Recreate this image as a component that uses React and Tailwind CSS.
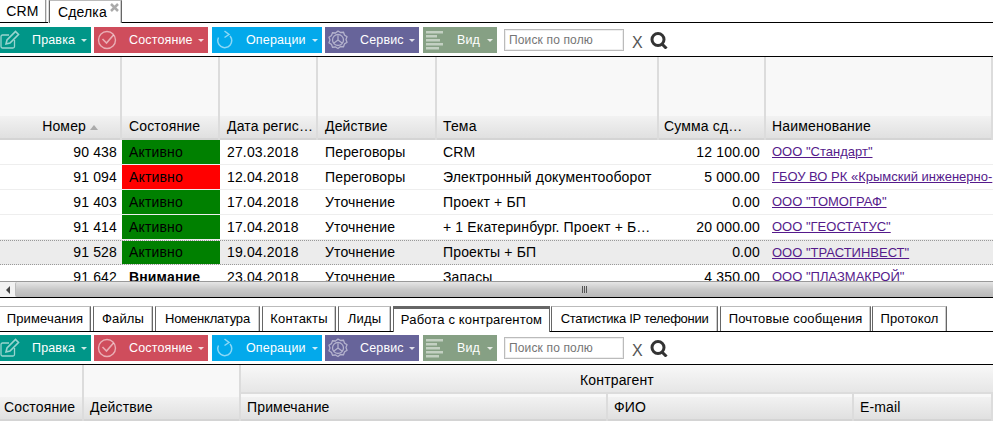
import React from "react";

const font = "font-['Liberation_Sans',Arial,sans-serif]";

const EditIcon = () => (
  <svg width="20" height="20" viewBox="0 0 20 20" fill="none" stroke="#fff" strokeOpacity="0.6" strokeWidth="1.3">
    <path d="M14.500 10v6.500a1.500 1.500 0 0 1-1.500 1.500H2.500A1.500 1.500 0 0 1 1 16.500V6.500A1.500 1.500 0 0 1 2.500 5H9" />
    <path d="M6 14l1-4 8.500-8.500 3 3L10 13z" strokeWidth="1.600" />
  </svg>
);

const CheckIcon = () => (
  <svg width="20" height="20" viewBox="0 0 20 20" fill="none" stroke="#fff" strokeOpacity="0.55" strokeWidth="1.400">
    <circle cx="10" cy="10" r="8.500" />
    <path d="M5.500 9l4 4 7-8" strokeWidth="1.600" />
  </svg>
);

const RefreshIcon = () => (
  <svg width="20" height="20" viewBox="0 0 20 20" fill="none" stroke="#fff" strokeOpacity="0.55" strokeWidth="1.500">
    <path d="M15 6a7 7 0 1 1-11.500 1.500" />
    <path d="M9.500 1l4.500 3.500L9.500 7.500" />
  </svg>
);

const GearIcon = () => (
  <svg width="20" height="20" viewBox="0 0 20 20" fill="none" stroke="#fff" strokeOpacity="0.5" strokeWidth="1.300">
    <path d="M10 1l2.500 1.500 3-.2 1 2.700 2.500 1.800-1 2.700 1 2.700-2.500 1.800-1 2.700-3-.2L10 18.500l-2.500-1.500-3 .2-1-2.700L1 12.700l1-2.700-1-2.700 2.500-1.800 1-2.700 3 .2z" />
    <circle cx="10" cy="10" r="5.500" />
    <path d="M10 10V5.500M10 10l-4 3M10 10l4 3" />
  </svg>
);

const ListIcon = () => (
  <svg width="18" height="20" viewBox="0 0 18 20" fill="#fff" fillOpacity="0.5">
    <rect x="0" y="1" width="17" height="2.500" />
    <rect x="0" y="5" width="11" height="2.500" />
    <rect x="0" y="9" width="14" height="2.500" />
    <rect x="0" y="13" width="17" height="2.500" />
    <rect x="0" y="17" width="13" height="2.500" />
  </svg>
);

const buttons = [
  { label: "Правка", icon: <EditIcon />, cls: "w-[94px] bg-[#009688]", iconCls: "pl-[3px] w-[35px]" },
  { label: "Состояние", icon: <CheckIcon />, cls: "w-[114px] ml-[3px] bg-[#cf4d5c]", iconCls: "pl-[3px] w-[35px]" },
  { label: "Операции", icon: <RefreshIcon />, cls: "w-[110px] ml-[4px] bg-[#03a9eb]", iconCls: "pl-[3px] w-[34px]" },
  { label: "Сервис", icon: <GearIcon />, cls: "w-[94px] ml-[3px] bg-[#67649a]", iconCls: "pl-[3px] w-[35px]" },
  { label: "Вид", icon: <ListIcon />, cls: "w-[74px] ml-[4px] bg-[#86a084]", iconCls: "pl-[3px] w-[34px]" },
];

const Toolbar = ({ cls }) => (
  <div className={"flex items-start ml-[-3px] border-b border-black " + cls}>
    {buttons.map((b) => (
      <div key={b.label} className={"relative flex items-center h-[26px] text-white text-[12.500px] " + b.cls}>
        <span className={"shrink-0 flex items-center " + b.iconCls}>{b.icon}</span>
        <span>{b.label}</span>
        <span className="absolute right-[4px] top-[12px] border-x-[3px] border-t-[3px] border-x-transparent border-t-white opacity-80" />
      </div>
    ))}
    <input
      placeholder="Поиск по полю"
      className="ml-[7px] mt-[2px] w-[120px] h-[22px] px-[4px] border border-[#bbb] shadow-[inset_0_0_0_1px_#eee] bg-white text-[12px] text-[#333] placeholder:text-[#757575] outline-none"
    />
    <span className="ml-[8px] mt-[8px] text-[#555] text-[16px] leading-none">X</span>
    <svg className="ml-[7px] mt-[5px]" width="18" height="17" viewBox="0 0 18 17" fill="none" stroke="#333" strokeWidth="3">
      <circle cx="8" cy="7.500" r="6" />
      <path d="M11.500 11.500l5 5" />
    </svg>
  </div>
);

const tabCls = "h-[25px] flex items-center justify-center whitespace-nowrap text-[13px] border-x border-t";

const lowerTabs = [
  { label: "Примечания", cls: "w-[92px] ml-[-1px]" },
  { label: "Файлы", cls: "w-[60px] ml-[2px]" },
  { label: "Номенклатура", cls: "w-[105px] ml-[2px] tracking-[-0.2px]" },
  { label: "Контакты", cls: "w-[74px] ml-[2px]" },
  { label: "Лиды", cls: "w-[53px] ml-[2px]" },
  { label: "Работа с контрагентом", cls: "w-[157px] ml-[2px] pb-[2px]", active: true },
  { label: "Статистика IP телефонии", cls: "w-[167px] ml-[1px] tracking-[-0.3px]" },
  { label: "Почтовые сообщения", cls: "w-[151px] ml-[2px]" },
  { label: "Протокол", cls: "w-[75px] ml-[1px]" },
];

const rows = [
  ["90 438", "Активно", "27.03.2018", "Переговоры", "CRM", "12 100.00", "ООО \"Стандарт\""],
  ["91 094", "Активно", "12.04.2018", "Переговоры", "Электронный документооборот", "5 000.00", "ГБОУ ВО РК «Крымский инженерно-"],
  ["91 403", "Активно", "17.04.2018", "Уточнение", "Проект + БП", "0.00", "ООО \"ТОМОГРАФ\""],
  ["91 414", "Активно", "17.04.2018", "Уточнение", "+ 1 Екатеринбург. Проект + Б…", "20 000.00", "ООО \"ГЕОСТАТУС\""],
  ["91 528", "Активно", "19.04.2018", "Уточнение", "Проекты + БП", "0.00", "ООО \"ТРАСТИНВЕСТ\""],
  ["91 642", "Внимание", "23.04.2018", "Уточнение", "Запасы", "4 350.00", "ООО \"ПЛАЗМАКРОЙ\""],
];

const HeadCell = ({ cls, pad = "px-[7px]", children }) => (
  <div className={"shrink-0 flex flex-col border-r-2 border-[#dcdcdc] " + cls}>
    <div className="flex-1 bg-[#f8f8f8]" />
    <div className={"h-[24px] flex items-center pb-[1px] border-b-2 border-[#d4d4d4] bg-gradient-to-b from-[#f2f2f2] to-[#e0e0e0] " + pad}>
      <span className="whitespace-nowrap">{children}</span>
    </div>
  </div>
);

const statusColor = (i) => {
  if (i === 1) return "bg-[#ff0000]";
  if (i === 5) return "font-bold";
  return "bg-[#008000]";
};

export default function App() {
  return (
    <div className={"w-[993px] h-[430px] overflow-hidden bg-white text-[14px] tracking-[0.15px] text-black " + font}>
      {/* верхние вкладки */}
      <div className="flex h-[23px] border-b border-black">
        <div className="w-[46px] h-[22px] flex items-center justify-center border-r border-[#999] shadow-[1px_0_0_#ddd]">CRM</div>
        <div className="relative ml-[3px] w-[73px] h-[23px] border-x border-t border-x-[#666] border-t-[#bbb] bg-white z-10 pl-[8px] pt-[1px] shadow-[inset_-1px_0_0_#ccc,-1px_0_0_#ddd]">
          Сделка
          <svg className="absolute right-[2px] top-[2px]" width="9" height="9" viewBox="0 0 9 9" stroke="#aaa" strokeWidth="2.500">
            <path d="M1 1l7 7M8 1l-7 7" />
          </svg>
        </div>
      </div>

      <Toolbar cls="h-[34px] pt-[4px]" />

      {/* основная таблица */}
      <div className="h-[83px] flex">
        <div className="w-[122px] shrink-0 flex flex-col border-r-2 border-[#dcdcdc]">
          <div className="flex-1 bg-[#f8f8f8]" />
          <div className="relative h-[24px] flex items-center justify-end pr-[34px] pb-[1px] border-b-2 border-[#d4d4d4] bg-gradient-to-b from-[#f2f2f2] to-[#e0e0e0]">
            Номер
            <span className="absolute right-[22px] top-[9px] border-x-[4px] border-b-[5px] border-x-transparent border-b-[#aaa]" />
          </div>
        </div>
        <HeadCell cls="w-[98px]">Состояние</HeadCell>
        <HeadCell cls="w-[98px]" pad="pl-[7px] pr-[2px]">Дата регис…</HeadCell>
        <HeadCell cls="w-[119px]">Действие</HeadCell>
        <HeadCell cls="w-[222px]" pad="px-[6px]">Тема</HeadCell>
        <HeadCell cls="w-[107px]" pad="pl-[5px] pr-[20px]">Сумма сд…</HeadCell>
        <HeadCell cls="flex-1 border-r-0" pad="px-[6px]">Наименование</HeadCell>
      </div>

      <div className="h-[141px] overflow-hidden">
        {rows.map((r, i) => (
          <div
            key={r[0]}
            className={
              "flex h-[25px] items-center " +
              (i === 4 ? "bg-[#ececec] border-y border-dotted border-[#999]" : "border-b border-[#eee]")
            }
          >
            <div className="w-[122px] shrink-0 text-right pr-[5px]">{r[0]}</div>
            <div className={"w-[98px] h-full shrink-0 pl-[7px] flex items-center " + statusColor(i)}>{r[1]}</div>
            <div className="w-[98px] shrink-0 pl-[7px]">{r[2]}</div>
            <div className="w-[119px] shrink-0 pl-[7px]">{r[3]}</div>
            <div className="w-[222px] shrink-0 pl-[6px] pr-[4px] whitespace-nowrap">{r[4]}</div>
            <div className="w-[107px] shrink-0 text-right pr-[6px]">{r[5]}</div>
            <a className="ml-[6px] whitespace-nowrap text-[13px] tracking-normal text-[#551a8b] underline">{r[6]}</a>
          </div>
        ))}
      </div>

      {/* горизонтальный скролл */}
      <div className="flex h-[16px] border-t border-[#999] bg-[#f2f2f2]">
        <div className="w-[15px] flex items-center justify-center">
          <span className="border-y-[4px] border-r-[4px] border-y-transparent border-r-[#444]" />
        </div>
        <div className="flex-1 flex items-center gap-px pl-[566px] rounded-l-[2px] border-l border-[#bbb] bg-gradient-to-b from-[#e6e6e6] via-[#c8c8c8] to-[#b8b8b8]">
          <span className="w-px h-[7px] bg-[#555]" />
          <span className="w-px h-[7px] bg-[#555]" />
          <span className="w-px h-[7px] bg-[#555]" />
        </div>
      </div>

      <div className="h-[35px] border-t border-black pt-[8px]">
        <div className="flex h-[26px] border-b border-black">
          {lowerTabs.map((t) => (
            <div
              key={t.label}
              className={
                tabCls + " " + t.cls +
                (t.active
                  ? " h-[26px] z-10 bg-white border-x-[#666] border-t-[3px] border-t-[#666]"
                  : " border-x-[#666] border-t-[#bbb] shadow-[inset_-1px_0_0_#ccc]")
              }
            >
              {t.label}
            </div>
          ))}
        </div>
      </div>

      <Toolbar cls="h-[33px] pt-[3px]" />

      {/* нижняя таблица */}
      <div className="h-[56px] flex">
        <HeadCell cls="w-[84px]" pad="px-[4px]">Состояние</HeadCell>
        <HeadCell cls="w-[157px]" pad="px-[6px]">Действие</HeadCell>
        <div className="flex-1 flex flex-col">
          <div className="h-[29px] flex items-center justify-center pt-[4px] border-b-2 border-[#dcdcdc] bg-gradient-to-b from-[#f8f8f8] to-[#e6e6e6]">
            Контрагент
          </div>
          <div className="flex-1 flex">
            <HeadCell cls="w-[367px]" pad="px-[6px]">Примечание</HeadCell>
            <HeadCell cls="w-[246px]" pad="px-[6px]">ФИО</HeadCell>
            <HeadCell cls="flex-1" pad="px-[6px]">E-mail</HeadCell>
          </div>
        </div>
      </div>
    </div>
  );
}
